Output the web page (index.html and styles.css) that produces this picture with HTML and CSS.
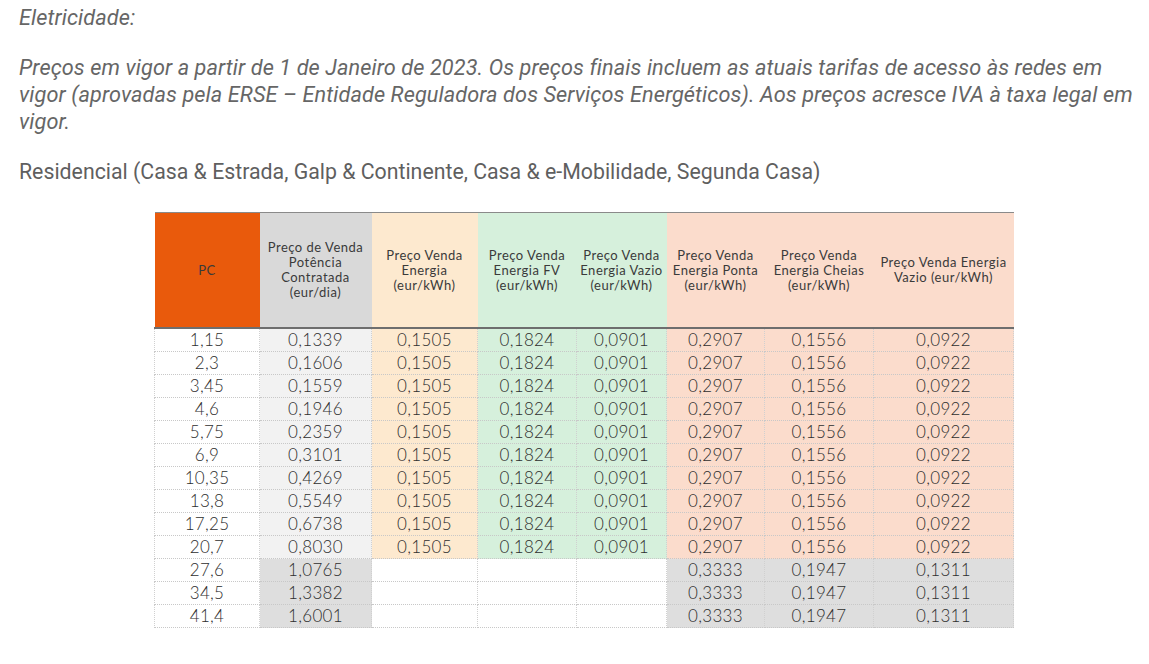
FILE: index.html
```html
<!DOCTYPE html>
<html lang="pt">
<head>
<meta charset="utf-8">
<title>Eletricidade</title>
<link rel="stylesheet" href="styles.css">
</head>
<body>
<div class="page">
  <p class="intro title">Eletricidade:</p>
  <p class="intro">Preços em vigor a partir de 1 de Janeiro de 2023. Os preços finais incluem as atuais tarifas de acesso às redes em vigor (aprovadas pela ERSE – Entidade Reguladora dos Serviços Energéticos). Aos preços acresce IVA à taxa legal em vigor.</p>
  <p class="segment">Residencial (Casa &amp; Estrada, Galp &amp; Continente, Casa &amp; e-Mobilidade, Segunda Casa)</p>
  <table class="prices">
    <colgroup>
      <col class="w1"><col class="w2"><col class="w3"><col class="w4"><col class="w5"><col class="w6"><col class="w7"><col class="w8">
    </colgroup>
    <thead>
      <tr>
        <th class="h-pc">PC</th>
        <th class="h-gray">Preço de Venda<br>Potência<br>Contratada<br>(eur/dia)</th>
        <th class="h-peach">Preço Venda<br>Energia<br>(eur/kWh)</th>
        <th class="h-green">Preço Venda<br>Energia FV<br>(eur/kWh)</th>
        <th class="h-green">Preço Venda<br>Energia Vazio<br>(eur/kWh)</th>
        <th class="h-salmon">Preço Venda<br>Energia Ponta<br>(eur/kWh)</th>
        <th class="h-salmon">Preço Venda<br>Energia Cheias<br>(eur/kWh)</th>
        <th class="h-salmon">Preço Venda Energia<br>Vazio (eur/kWh)</th>
      </tr>
    </thead>
    <tbody>
      <tr><td>1,15</td><td class="c-lgray">0,1339</td><td class="c-peach">0,1505</td><td class="c-green">0,1824</td><td class="c-green">0,0901</td><td class="c-salmon">0,2907</td><td class="c-salmon">0,1556</td><td class="c-salmon">0,0922</td></tr>
      <tr><td>2,3</td><td class="c-lgray">0,1606</td><td class="c-peach">0,1505</td><td class="c-green">0,1824</td><td class="c-green">0,0901</td><td class="c-salmon">0,2907</td><td class="c-salmon">0,1556</td><td class="c-salmon">0,0922</td></tr>
      <tr><td>3,45</td><td class="c-lgray">0,1559</td><td class="c-peach">0,1505</td><td class="c-green">0,1824</td><td class="c-green">0,0901</td><td class="c-salmon">0,2907</td><td class="c-salmon">0,1556</td><td class="c-salmon">0,0922</td></tr>
      <tr><td>4,6</td><td class="c-lgray">0,1946</td><td class="c-peach">0,1505</td><td class="c-green">0,1824</td><td class="c-green">0,0901</td><td class="c-salmon">0,2907</td><td class="c-salmon">0,1556</td><td class="c-salmon">0,0922</td></tr>
      <tr><td>5,75</td><td class="c-lgray">0,2359</td><td class="c-peach">0,1505</td><td class="c-green">0,1824</td><td class="c-green">0,0901</td><td class="c-salmon">0,2907</td><td class="c-salmon">0,1556</td><td class="c-salmon">0,0922</td></tr>
      <tr><td>6,9</td><td class="c-lgray">0,3101</td><td class="c-peach">0,1505</td><td class="c-green">0,1824</td><td class="c-green">0,0901</td><td class="c-salmon">0,2907</td><td class="c-salmon">0,1556</td><td class="c-salmon">0,0922</td></tr>
      <tr><td>10,35</td><td class="c-lgray">0,4269</td><td class="c-peach">0,1505</td><td class="c-green">0,1824</td><td class="c-green">0,0901</td><td class="c-salmon">0,2907</td><td class="c-salmon">0,1556</td><td class="c-salmon">0,0922</td></tr>
      <tr><td>13,8</td><td class="c-lgray">0,5549</td><td class="c-peach">0,1505</td><td class="c-green">0,1824</td><td class="c-green">0,0901</td><td class="c-salmon">0,2907</td><td class="c-salmon">0,1556</td><td class="c-salmon">0,0922</td></tr>
      <tr><td>17,25</td><td class="c-lgray">0,6738</td><td class="c-peach">0,1505</td><td class="c-green">0,1824</td><td class="c-green">0,0901</td><td class="c-salmon">0,2907</td><td class="c-salmon">0,1556</td><td class="c-salmon">0,0922</td></tr>
      <tr><td>20,7</td><td class="c-lgray">0,8030</td><td class="c-peach">0,1505</td><td class="c-green">0,1824</td><td class="c-green">0,0901</td><td class="c-salmon">0,2907</td><td class="c-salmon">0,1556</td><td class="c-salmon">0,0922</td></tr>
      <tr><td>27,6</td><td class="c-dgray">1,0765</td><td></td><td></td><td></td><td class="c-dgray">0,3333</td><td class="c-dgray">0,1947</td><td class="c-dgray">0,1311</td></tr>
      <tr><td>34,5</td><td class="c-dgray">1,3382</td><td></td><td></td><td></td><td class="c-dgray">0,3333</td><td class="c-dgray">0,1947</td><td class="c-dgray">0,1311</td></tr>
      <tr><td>41,4</td><td class="c-dgray">1,6001</td><td></td><td></td><td></td><td class="c-dgray">0,3333</td><td class="c-dgray">0,1947</td><td class="c-dgray">0,1311</td></tr>
    </tbody>
  </table>
</div>
</body>
</html>
```
FILE: styles.css
```css
html, body {
  margin: 0;
  padding: 0;
  background: #ffffff;
}

.page {
  padding: 4px 4px 20px 19px;
  font-family: Roboto, "Liberation Sans", sans-serif;
  color: #666666;
}

.intro {
  font-style: italic;
  font-size: 21.7px;
  letter-spacing: 0.1px;
  line-height: 27px;
  margin: 0 0 23px 0;
  max-width: 1126px;
}

.segment {
  font-size: 21.3px;
  line-height: 27px;
  margin: 0 0 27px 0;
  color: #5f5f5f;
}

.prices {
  border-collapse: collapse;
  table-layout: fixed;
  width: 859px;
  margin-left: 135px;
  font-family: Lato, "DejaVu Sans", sans-serif;
  color: #333333;
}

.w1 { width: 105px; }
.w2 { width: 112px; }
.w3 { width: 106px; }
.w4 { width: 99px; }
.w5 { width: 90px; }
.w6 { width: 98px; }
.w7 { width: 109px; }
.w8 { width: 140px; }

.prices thead th {
  height: 114px;
  font-weight: 400;
  font-size: 13px;
  letter-spacing: 0.5px;
  line-height: 15px;
  padding: 0;
  white-space: nowrap;
  text-align: center;
  vertical-align: middle;
  border-top: 1px solid #8a8a8a;
  border-bottom: 2px solid #6e6e6e;
  color: #3a3a3a;
}

.h-pc { background: #e95a0c; color: #3a2a20; }
.h-gray { background: #d9d9d9; }
.h-peach { background: #fde9cf; }
.h-green { background: #d6f0dc; }
.h-salmon { background: #fbdccc; }

.prices tbody td {
  height: 22px;
  padding: 0;
  font-size: 17px;
  font-weight: 300;
  line-height: 22px;
  letter-spacing: 0.3px;
  text-align: center;
  color: #2e2e2e;
  border-bottom: 1px dotted #c8c8c8;
  border-left: 1px dotted #d0d0d0;
  border-right: 1px dotted #d0d0d0;
}

.c-lgray { background: #f2f2f2; }
.c-dgray { background: #dedede; }
.c-peach { background: #fde9cf; }
.c-green { background: #d6f0dc; }
.c-salmon { background: #fbdccc; }
```
